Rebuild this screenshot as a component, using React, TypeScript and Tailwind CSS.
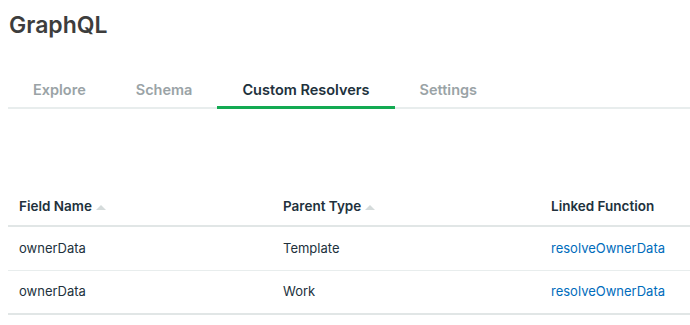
import React from 'react';

const tabs = ['Explore', 'Schema', 'Custom Resolvers', 'Settings'];

const rows = [
  { field: 'ownerData', parent: 'Template', fn: 'resolveOwnerData' },
  { field: 'ownerData', parent: 'Work', fn: 'resolveOwnerData' },
];

const SortCaret = () => (
  <svg width="10" height="6" viewBox="0 0 10 6" className="ml-1 inline-block">
    <path d="M0 6 L5 1 L10 6 Z" fill="#d5dbdb" />
  </svg>
);

export default function App() {
  const active = 'Custom Resolvers';
  return (
    <div className="w-[690px] h-[325px] bg-white pl-2 pt-[10px] overflow-hidden" style={{ fontFamily: 'Inter, "Noto Sans", sans-serif' }}>
      <h1 className="text-[23px] font-semibold text-[#3d3d3d] leading-[30px] pl-[1px]">GraphQL</h1>

      {/* tabs */}
      <div className="mt-[39px] flex border-b-2 border-[#e8eded]">
        {tabs.map((t) => (
          <div
            key={t}
            className={`px-[25px] pb-[5px] -mb-[2px] text-[14.5px] font-semibold leading-[22px] border-b-[3px] ${
              t === active ? 'text-[#21313c] border-[#13aa52]' : 'text-[#9aa3a6] border-transparent'
            }`}
          >
            {t}
          </div>
        ))}
      </div>

      {/* table */}
      <table className="mt-[87px] w-full text-left border-collapse">
        <thead>
          <tr className="border-b-2 border-[#e1e6e6]">
            <th className="w-[275px] pl-[11px] pb-[9px] text-[13.5px] font-semibold text-[#21313c]">
              Field Name<SortCaret />
            </th>
            <th className="w-[268px] pb-[9px] text-[13.5px] font-semibold text-[#21313c]">
              Parent Type<SortCaret />
            </th>
            <th className="pb-[9px] text-[13.5px] font-semibold text-[#21313c]">Linked Function</th>
          </tr>
        </thead>
        <tbody>
          {rows.map((r, i) => (
            <tr key={i} className={i === rows.length - 1 ? 'border-b-2 border-[#e1e6e6]' : 'border-b border-[#e8eded]'}>
              <td className="pl-[11px] h-[44px] text-[13px] text-[#21313c]">{r.field}</td>
              <td className="h-[44px] text-[13px] text-[#21313c]">{r.parent}</td>
              <td className="h-[44px] text-[13px] text-[#006cbc]">{r.fn}</td>
            </tr>
          ))}
        </tbody>
      </table>
    </div>
  );
}
